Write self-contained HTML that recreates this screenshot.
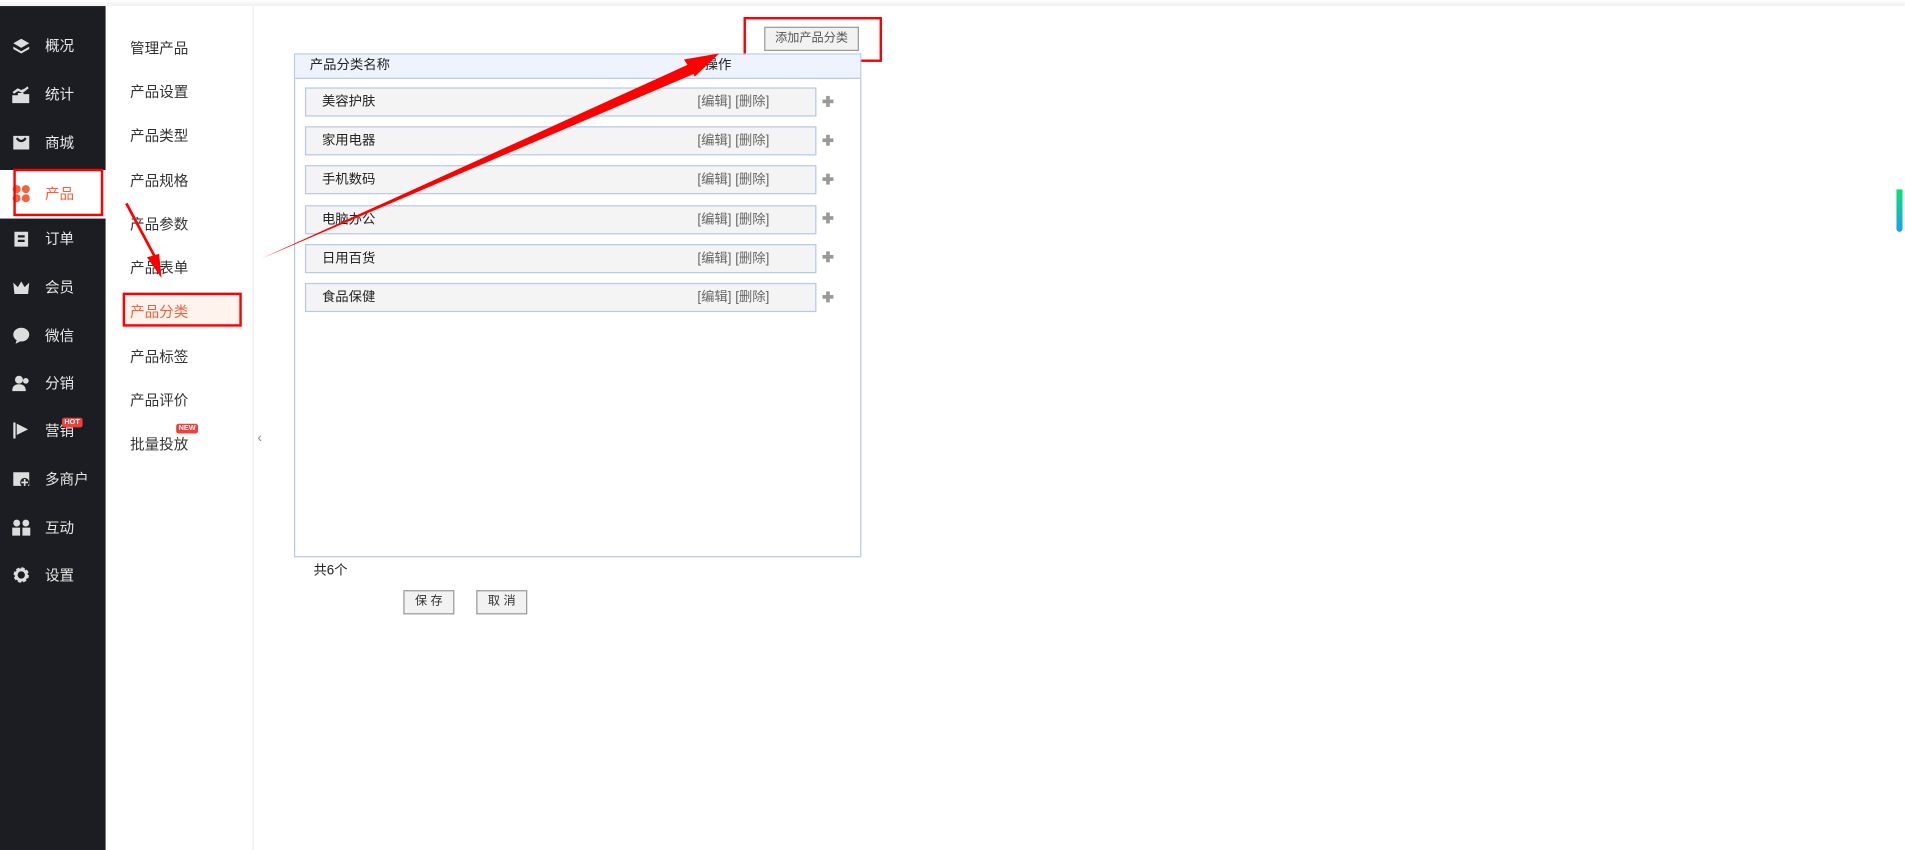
<!DOCTYPE html>
<html><head><meta charset="utf-8"><style>
*{margin:0;padding:0;box-sizing:border-box}
html,body{width:1905px;height:850px;overflow:hidden;background:#fff;font-family:"Liberation Sans","Noto Sans CJK SC",sans-serif}
#w{position:absolute;left:0;top:0;width:1568px;height:700px;transform:scale(1.2149,1.2143);transform-origin:0 0}
.a{position:absolute}
.top{left:0;top:0;width:1568px;height:5px;background:linear-gradient(#fff,#f0f0f0)}
.side{left:0;top:5px;width:87px;height:695px;background:#1c1d22}
.mi{position:absolute;left:0;width:87px;height:40px;color:#e8e8e8;font-size:12px;line-height:40px;padding-left:37px}
.mi svg{position:absolute;left:10px;top:12px}
.sub{left:87px;top:5px;width:122px;height:695px;background:#fff;border-right:1px solid #eee}
.si{position:absolute;left:20px;font-size:12px;color:#333}
.btn{border:1px solid #999;background:#f2f2f2;color:#555;font-size:10px;text-align:center}
.row{position:absolute;left:251px;width:421px;height:24px;background:#f4f4f4;border:1px solid #b8c8e8;font-size:11px;color:#222;line-height:22px}
.row span{position:absolute;left:13px}
.row i{position:absolute;left:322px;font-style:normal;color:#666}
.plus{position:absolute;left:677px;width:9px;height:9px}
.plus:before{content:"";position:absolute;left:3px;top:0;width:3px;height:9px;background:#999}
.plus:after{content:"";position:absolute;left:0;top:3px;width:9px;height:3px;background:#999}
.badge{position:absolute;background:#f0403c;color:#fff;font-size:6px;font-weight:bold;padding:0 2px;line-height:8px;border-radius:2px}
</style></head><body><div id="w">
<div class="a top"></div>
<div class="a side">
<div class="mi" style="top:13px"><svg width="15" height="15" viewBox="0 0 16 16"><path d="M8 2L15 6 8 10 1 6z M1 9l7 4 7-4v2l-7 4-7-4z" fill="#ddd"/></svg>概况</div>
<div class="mi" style="top:53px"><svg width="15" height="15" viewBox="0 0 16 16"><path d="M1 15V10h3v5zM6 15V8h3v7zM11 15V9h3v6zM1 7l4-3 4 2 5-4" stroke="#ddd" stroke-width="2" fill="#ddd"/></svg>统计</div>
<div class="mi" style="top:93px"><svg width="15" height="15" viewBox="0 0 16 16"><path d="M1 2h14v12H1z" fill="#ddd"/><path d="M4 4q4 5 8 0" stroke="#1c1d22" stroke-width="2" fill="none"/></svg>商城</div>
<div class="mi" style="top:135px;background:#fff;color:#f5603f;height:40px"><svg width="15" height="15" viewBox="0 0 16 16" fill="#f5603f"><circle cx="4" cy="4" r="3.5"/><circle cx="12" cy="4" r="3.5"/><circle cx="4" cy="12" r="3.5"/><circle cx="12" cy="12" r="3.5"/></svg>产品</div>
<div class="mi" style="top:172px"><svg width="15" height="15" viewBox="0 0 16 16"><path d="M2 2h12v13H2z" fill="#ddd"/><path d="M5 6h6M5 10h6" stroke="#1c1d22" stroke-width="2"/></svg>订单</div>
<div class="mi" style="top:212px"><svg width="15" height="15" viewBox="0 0 16 16"><path d="M1 4l4 4 3-5 3 5 4-4-1 10H2z" fill="#ddd"/></svg>会员</div>
<div class="mi" style="top:252px"><svg width="15" height="15" viewBox="0 0 16 16"><ellipse cx="8" cy="7" rx="7" ry="6" fill="#ddd"/><path d="M4 12l-1 3 4-2z" fill="#ddd"/></svg>微信</div>
<div class="mi" style="top:291px"><svg width="15" height="15" viewBox="0 0 16 16" fill="#ddd"><circle cx="6" cy="5" r="3.5"/><path d="M0 15q0-6 6-6t6 6z"/><circle cx="12" cy="6" r="2.5"/></svg>分销</div>
<div class="mi" style="top:330px"><svg width="15" height="15" viewBox="0 0 16 16"><path d="M2 1v14" stroke="#ddd" stroke-width="2"/><path d="M4 2l10 5-10 5z" fill="#ddd"/></svg>营销<span class="badge" style="left:51px;top:9px">HOT</span></div>
<div class="mi" style="top:370px"><svg width="15" height="15" viewBox="0 0 16 16"><path d="M1 2h14v12H1z" fill="#ddd"/><circle cx="11" cy="11" r="4" fill="#1c1d22"/><path d="M11 8v6M8 11h6" stroke="#ddd" stroke-width="1.5"/></svg>多商户</div>
<div class="mi" style="top:410px"><svg width="15" height="15" viewBox="0 0 16 16" fill="#ddd"><circle cx="4" cy="4" r="3"/><circle cx="12" cy="4" r="3"/><path d="M0 15V8h7v7zM9 15V8h7v7z"/></svg>互动</div>
<div class="mi" style="top:449px"><svg width="15" height="15" viewBox="0 0 16 16"><circle cx="8" cy="8" r="5" fill="none" stroke="#ddd" stroke-width="3.5" stroke-dasharray="2.5 1.4"/><circle cx="8" cy="8" r="4.5" fill="none" stroke="#ddd" stroke-width="2.5"/></svg>设置</div>
</div>
<div class="a" style="left:11px;top:139px;width:74px;height:39px;border:2px solid #f00"></div>
<div class="a sub">
<div class="si" style="top:26px">管理产品</div>
<div class="si" style="top:62px">产品设置</div>
<div class="si" style="top:98px">产品类型</div>
<div class="si" style="top:135px">产品规格</div>
<div class="si" style="top:171px">产品参数</div>
<div class="si" style="top:207px">产品表单</div>
<div style="position:absolute;left:13px;top:237px;width:98px;height:27px;background:#fff3ee"></div>
<div class="si" style="top:243px;color:#f5603f">产品分类</div>
<div class="si" style="top:280px">产品标签</div>
<div class="si" style="top:316px">产品评价</div>
<div class="si" style="top:352px">批量投放</div>
<span class="badge" style="left:58px;top:344px">NEW</span>
</div>
<div class="a" style="left:101px;top:241px;width:98px;height:28px;border:2px solid #f00"></div>
<div class="a" style="left:212px;top:355px;font-size:11px;color:#888">‹</div>
<div class="a btn" style="left:629px;top:22px;width:78px;height:20px;line-height:18px">添加产品分类</div>
<div class="a" style="left:612px;top:14px;width:114px;height:37px;border:2.5px solid #f00"></div>
<div class="a" style="left:242px;top:44px;width:467px;height:415px;border:1px solid #b8c8e8"></div>
<div class="a" style="left:243px;top:45px;width:465px;height:20px;background:#eef3fd;border-bottom:1px solid #b8c8e8;font-size:11px;color:#222;line-height:19px"><span style="position:absolute;left:12px">产品分类名称</span><span style="position:absolute;left:337px">操作</span></div>
<div class="row" style="top:72px"><span>美容护肤</span><i>[编辑] [删除]</i></div><div class="plus" style="top:79px"></div>
<div class="row" style="top:104px"><span>家用电器</span><i>[编辑] [删除]</i></div><div class="plus" style="top:111px"></div>
<div class="row" style="top:136px"><span>手机数码</span><i>[编辑] [删除]</i></div><div class="plus" style="top:143px"></div>
<div class="row" style="top:169px"><span>电脑办公</span><i>[编辑] [删除]</i></div><div class="plus" style="top:175px"></div>
<div class="row" style="top:201px"><span>日用百货</span><i>[编辑] [删除]</i></div><div class="plus" style="top:207px"></div>
<div class="row" style="top:233px"><span>食品保健</span><i>[编辑] [删除]</i></div><div class="plus" style="top:240px"></div>
<div class="a" style="left:258px;top:461px;font-size:11px;color:#222">共6个</div>
<div class="a btn" style="left:332px;top:486px;width:42px;height:20px;line-height:18px;color:#333">保 存</div>
<div class="a btn" style="left:392px;top:486px;width:42px;height:20px;line-height:18px;color:#333">取 消</div>
<div class="a" style="left:1561px;top:156px;width:5px;height:35px;border-radius:0 0 3px 3px;background:linear-gradient(#10e070,#1aa0f0)"></div>
<svg class="a" style="left:0;top:0" width="1568" height="700">
<polygon points="103,168 105,167 129,212 127,213" fill="#f00"/>
<polygon points="133,229 121,212 131,209" fill="#f00"/>
<polygon points="215,213 569,52 573,60" fill="#f00"/>
<polygon points="592,44 563,49 572,63" fill="#f00"/>
</svg>
</div></body></html>
